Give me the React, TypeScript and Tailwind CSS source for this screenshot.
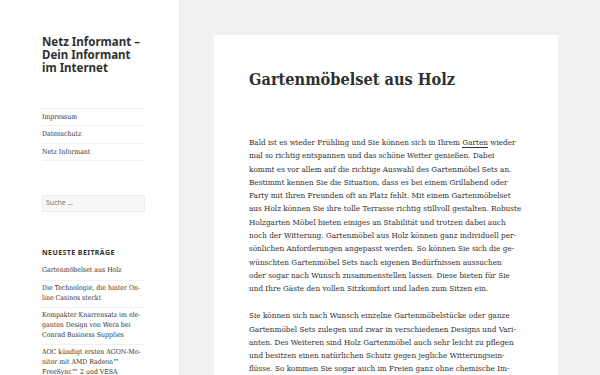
import React from "react";

const serif = {
  fontFamily: '"DejaVu Serif Condensed", "DejaVu Serif", "Liberation Serif", serif',
  fontStretch: "condensed",
};
const sans = { fontFamily: '"Noto Sans", "Open Sans", sans-serif' };

const p1 = [
  "Bald ist es wieder Frühling und Sie können sich in Ihrem |Garten| wieder",
  "mal so richtig entspannen und das schöne Wetter genießen. Dabei",
  "kommt es vor allem auf die richtige Auswahl des Gartenmöbel Sets an.",
  "Bestimmt kennen Sie die Situation, dass es bei einem Grillabend oder",
  "Party mit Ihren Freunden oft an Platz fehlt. Mit einem Gartenmöbelset",
  "aus Holz können Sie ihre tolle Terrasse richtig stillvoll gestalten. Robuste",
  "Holzgarten Möbel bieten einiges an Stabilität und trotzen dabei auch",
  "noch der Witterung. Gartenmöbel aus Holz können ganz individuell per-",
  "sönlichen Anforderungen angepasst werden. So können Sie sich die ge-",
  "wünschten Gartenmöbel Sets nach eigenen Bedürfnissen aussuchen",
  "oder sogar nach Wunsch zusammenstellen lassen. Diese bieten für Sie",
  "und Ihre Gäste den vollen Sitzkomfort und laden zum Sitzen ein.",
];

const p2 = [
  "Sie können sich nach Wunsch einzelne Gartenmöbelstücke oder ganze",
  "Gartenmöbel Sets zulegen und zwar in verschiedenen Designs und Vari-",
  "anten. Des Weiteren sind Holz Gartenmöbel auch sehr leicht zu pflegen",
  "und besitzen einen natürlichen Schutz gegen jegliche Witterungsein-",
  "flüsse. So kommen Sie sogar auch im Freien ganz ohne chemische Im-",
];

function Line({ text }: { text: string }) {
  const parts = text.split("|");
  return (
    <div className="whitespace-nowrap">
      {parts.map((p, i) =>
        i % 2 === 1 ? (
          <span key={i} className="border-b border-[#333333]">
            {p}
          </span>
        ) : (
          <span key={i}>{p}</span>
        )
      )}
    </div>
  );
}

const posts = [
  ["Gartenmöbelset aus Holz"],
  ["Die Technologie, die hinter On-", "line Casinos steckt"],
  ["Kompakter Knarrensatz im ele-", "ganten Design von Wera bei", "Conrad Business Supplies"],
  ["AOC kündigt ersten AGON-Mo-", "nitor mit AMD Radeon™", "FreeSync™ 2 und VESA"],
];

export default function App() {
  return (
    <div className="flex w-[600px] h-[375px] overflow-hidden bg-[#f1f1f1] text-[#2f2f2f]">
      <aside className="w-[179px] shrink-0 bg-white shadow-[0_0_1px_rgba(0,0,0,0.15)] pl-[42px] pr-[34px] pt-[35px]">
        <div style={sans} className="text-[11.5px] font-bold leading-[13.2px]">
          <div>Netz Informant –</div>
          <div>Dein Informant</div>
          <div>im Internet</div>
        </div>
        <nav style={serif} className="mt-[33.5px] border-t border-[#f0f0f0] text-[6.9px]">
          {["Impressum", "Datenschutz", "Netz Informant"].map((t) => (
            <div key={t} className="h-[17.3px] flex items-center border-b border-[#f0f0f0]">
              {t}
            </div>
          ))}
        </nav>
        <div
          style={sans}
          className="mt-[34px] h-[17px] border border-[#ececec] bg-[#f7f7f7] flex items-center pl-[3px] text-[7px] text-[#777]"
        >
          Suche …
        </div>
        <div style={sans} className="mt-[35.5px] text-[7px] font-bold tracking-[0.06em] uppercase leading-[10px]">
          Neueste Beiträge
        </div>
        <div style={serif} className="mt-[5.5px] text-[6.9px] leading-[9.7px]">
          {posts.map((lines, i) => (
            <div key={i} className="border-b border-[#f0f0f0] pt-[3.3px] pb-[3.6px]">
              {lines.map((l) => (
                <div key={l} className="whitespace-nowrap">
                  {l}
                </div>
              ))}
            </div>
          ))}
        </div>
      </aside>
      <main className="flex-1 pl-[35px] pt-[35px]">
        <article className="w-[344px] bg-white pl-[35px] pt-[35px] h-[400px]">
          <h1 style={serif} className="text-[16.2px] font-bold leading-[20px]">
            Gartenmöbelset aus Holz
          </h1>
          <div style={serif} className="mt-[46px] text-[8.1px] leading-[13.3px]">
            <div>
              {p1.map((l) => (
                <Line key={l} text={l} />
              ))}
            </div>
            <div className="mt-[13.7px]">
              {p2.map((l) => (
                <Line key={l} text={l} />
              ))}
            </div>
          </div>
        </article>
      </main>
    </div>
  );
}
